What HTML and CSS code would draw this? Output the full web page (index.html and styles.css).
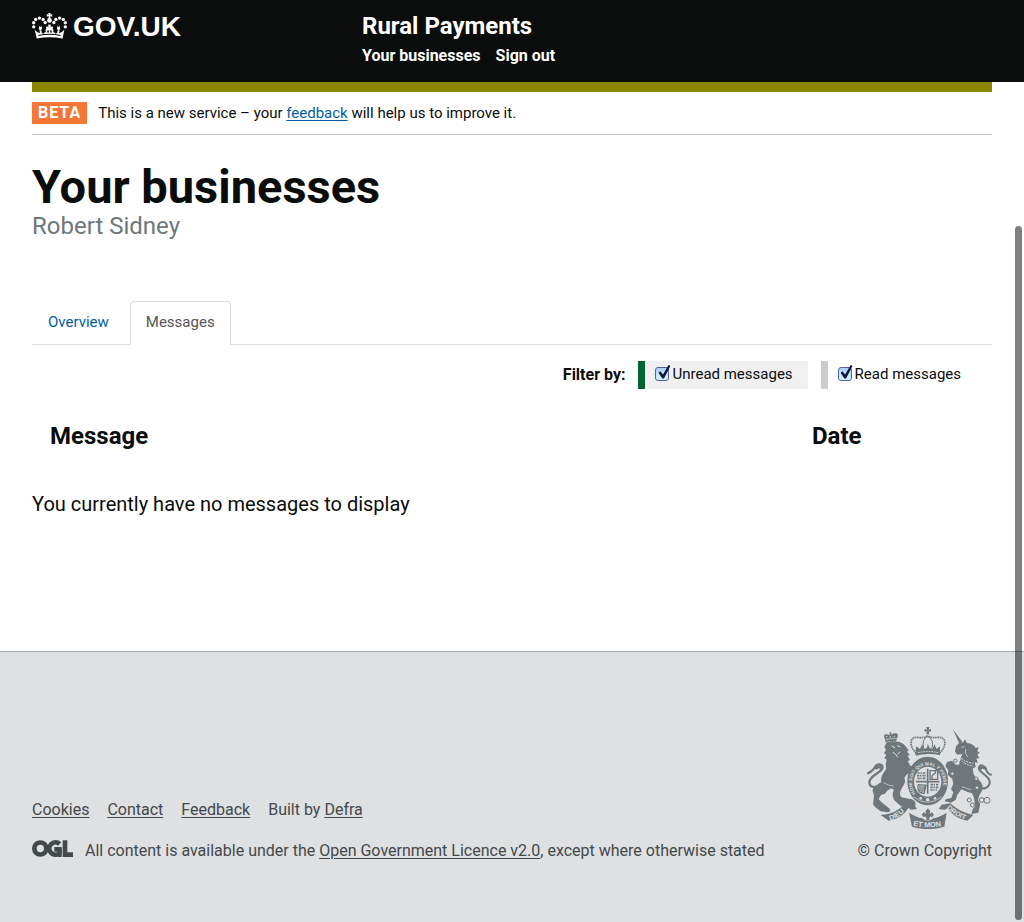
FILE: index.html
```html
<!DOCTYPE html>
<html lang="en">
<head>
<meta charset="utf-8">
<meta name="viewport" content="width=device-width, initial-scale=1">
<title>Your businesses - Rural Payments</title>
<link rel="stylesheet" href="styles.css">
</head>
<body>
<header class="site-header">
  <div class="wrap site-header-inner">
    <a class="logo" href="#">
      <svg class="crown" viewBox="36 38 104 77" aria-hidden="true">
        <g fill="#fff">
          <path d="M50 114 L44 88 Q52 98 60 97 L58 90 L64 90 L65 97 Q72 98 77 94 L76 88 L79 85 L77 80 L81 77 L85 81 L84 76 L85 72 L91 72 L92 76 L91 81 L95 77 L99 80 L97 85 L100 88 L99 94 Q105 98 111 97 L112 90 L118 90 L116 97 Q124 98 132 88 L127 114 Q88 106 50 114Z"/>
          <path d="M84 38h8l-2 5 6-2v8l-6-2 2 7h-8l2-7-6 2v-8l6 2z"/>
          <circle cx="88" cy="60" r="7"/>
          <circle cx="41" cy="79" r="5"/><circle cx="41" cy="67" r="5"/><circle cx="47" cy="57" r="5"/><circle cx="58" cy="53" r="5"/><circle cx="69" cy="57" r="5"/><circle cx="75" cy="66" r="5"/>
          <circle cx="135" cy="79" r="5"/><circle cx="135" cy="67" r="5"/><circle cx="129" cy="57" r="5"/><circle cx="118" cy="53" r="5"/><circle cx="107" cy="57" r="5"/><circle cx="101" cy="66" r="5"/>
          <path d="M58 76l3 4 3-4 2 9-5 6-5-6zM112 76l3 4 3-4 2 9-5 6-5-6z"/>
        </g>
        <path d="M55 105Q88 97 121 105" stroke="#0b0c0c" stroke-width="3" fill="none"/>
        <path d="M71 90l-5 7 5 3zM105 90l5 7-5 3zM82 89h4v7h-5zM94 89h-4v7h5z" fill="#0b0c0c"/>
      </svg>
      <span>GOV.UK</span>
    </a>
    <div class="service">
      <a class="service-name" href="#">Rural Payments</a>
      <nav class="service-nav" aria-label="Service">
        <a href="#">Your businesses</a>
        <a href="#">Sign out</a>
      </nav>
    </div>
  </div>
</header>

<main class="wrap main">
  <div class="phase">
    <strong class="phase-tag">BETA</strong>
    <span>This is a new service – your <a href="#">feedback</a> will help us to improve it.</span>
  </div>

  <h1 class="title">Your businesses</h1>
  <p class="subtitle">Robert Sidney</p>

  <nav class="tabs" aria-label="Sections">
    <a class="tab" href="#">Overview</a>
    <a class="tab tab-active" href="#" aria-current="page">Messages</a>
  </nav>

  <form class="filters">
    <strong>Filter by:</strong>
    <label class="filter filter-unread" for="unread"><input id="unread" type="checkbox" checked>Unread messages</label>
    <label class="filter" for="read"><input id="read" type="checkbox" checked>Read messages</label>
  </form>

  <table class="messages">
    <thead>
      <tr><th scope="col">Message</th><th class="col-date" scope="col">Date</th></tr>
    </thead>
  </table>
  <p class="empty">You currently have no messages to display</p>
</main>

<footer class="site-footer">
  <div class="wrap footer-inner">
    <div class="footer-meta">
      <ul class="footer-links">
        <li><a href="#">Cookies</a></li>
        <li><a href="#">Contact</a></li>
        <li><a href="#">Feedback</a></li>
        <li>Built by <a href="#">Defra</a></li>
      </ul>
      <div class="licence">
        <svg class="ogl" viewBox="36 135 123 51" role="img" aria-label="Open Government Licence">
          <g fill="none" stroke="#43484b" stroke-width="14">
            <circle cx="61" cy="160.500" r="18"/>
            <path d="M119 147A18.500 18.500 0 1 0 118 175V163H103"/>
            <path d="M135 136V179H159"/>
          </g>
          <path d="M112 160h13v26h-10z" fill="#43484b"/>
        </svg>
        <p>All content is available under the <a href="#">Open Government Licence v2.0</a>, except where otherwise stated</p>
      </div>
    </div>
    <a class="copyright" href="#">
      <svg class="crest" viewBox="33 20 375 306" aria-hidden="true">
        <defs>
          <path id="garter" d="M179 219A47 51 0 1 1 251 219"/>
          <path id="scroll-left" d="M103 300Q132 292 156 262"/>
          <path id="scroll-mid" d="M171 315Q216 327 266 315"/>
          <path id="scroll-right" d="M272 264Q298 292 342 302"/>
        </defs>
        <g fill="#6f777b">
          <!-- lion -->
          <path d="M89 66L84 48Q83 41 91 42Q98 42 101 44L101 36L106 36L106 43Q112 38 119 39Q128 40 125 49L120 63Q104 60 89 66Z"/>
          <path d="M92 66Q108 60 127 64Q144 68 151 81L158 90L153 94L161 103L155 107L162 119L155 122L163 136L177 139L165 154Q151 161 145 173Q150 184 143 194L136 207Q127 221 137 231L157 235Q174 235 178 247Q181 258 172 259L135 258L114 239Q106 222 114 208L105 204Q91 212 87 220L75 224L68 236L76 245L102 266Q105 274 96 276L74 273L57 260L51 252L54 226L50 213Q49 201 62 194L76 185Q73 173 82 158L91 145L89 131L92 118L85 113L91 103L84 99L90 88L85 80Z"/>
          <!-- unicorn -->
          <path d="M291 27l28 38-9 5z"/>
          <path d="M300 78L309 68L322 66L327 57L333 68Q352 70 359 83L368 81L364 92L371 97L364 103L370 113L361 115L366 127L356 126L359 140L351 144Q349 159 359 171Q374 181 380 196Q381 211 370 225L366 239L372 255L367 277L346 281L350 267L357 258L354 233L348 219L333 214L316 207L304 223L299 239L285 247L266 243L269 237L286 233L292 216L285 206L292 190L289 176L275 163L277 149L268 138L273 125L288 121L299 133L309 133L314 112L319 101L304 103L297 94Z"/>
          <!-- crown -->
          <path d="M211 20h9l-2 8 7-2v9l-7-2 2 9h-9l2-9-7 2v-9l7 2z"/>
          <path d="M179 88L181 78L192 86L198 72L204 85L213 83L215 70L221 83L230 85L235 72L242 86L252 78L252 105Q216 97 179 106Z"/>
          <!-- garter -->
          <path fill-rule="evenodd" d="M215 109A61 73 0 1 1 214.900 109ZM215 139A41 45 0 1 0 215.100 139Z"/>
          <!-- scroll -->
          <path d="M74 284Q118 283 149 249L175 253L183 266L164 268L158 262Q137 295 98 301Z"/>
          <path d="M352 284Q316 278 282 249L257 253L248 266L267 268L274 264Q297 296 334 301Z"/>
          <path d="M159 277Q216 314 272 277L265 319Q216 334 168 319Z"/>
        </g>
        <circle cx="215" cy="281" r="20" fill="#dee0e2"/>
        <g fill="#6f777b">
          <path d="M216 264l7 9-2 8 7-5 6 7-6 8-6-3v4h-4l4 8h-13l4-8h-4v-4l-6 3-6-8 6-7 7 5-2-8z"/>
        </g>
        <g fill="none" stroke="#6f777b">
          <!-- crown arches -->
          <path d="M181 99C157 76 162 49 184 51Q204 54 215 47Q227 54 247 51C270 49 275 76 250 99" stroke-width="5" stroke-dasharray="5 2"/>
          <path d="M203 83Q196 59 215 47Q235 59 228 83" stroke-width="3"/>
          <!-- tails -->
          <path d="M82 188C62 207 36 203 41 181C48 162 76 157 79 143C81 131 65 130 59 137Q52 151 34 160" stroke-width="7"/>
          <path d="M77 142Q64 136 58 146" stroke-width="9"/>
          <path d="M373 204C395 208 408 190 397 174C384 159 365 152 369 140C374 130 390 137 391 150Q396 161 407 164" stroke-width="6"/>
          <path d="M388 145q-13-8-16 3" stroke-width="8"/>
          <!-- shield quarters -->
          <path d="M215 145V220M180 184H250" stroke-width="5"/>
          <path d="M184 158h26M183 166h27M184 174h26M224 193h25M223 201h26M223 209h20" stroke-width="5" stroke-dasharray="7 2 4 3"/>
          <path d="M222 151h23v26h-23zM229 176q-4-10 3-13q8-4 6-10M186 193v14q5 12 18 13l6-25-24-2M192 196v16M198 198v18M204 196v18" stroke-width="4"/>
          <!-- chain -->
          <g stroke-width="3">
            <circle cx="298" cy="121" r="5" fill="#dee0e2"/><circle cx="289" cy="160" r="5" fill="#dee0e2"/><circle cx="361" cy="175" r="5" fill="#dee0e2"/><circle cx="363" cy="202" r="5" fill="#dee0e2"/><circle cx="340" cy="239" r="6"/><circle cx="349" cy="254" r="6"/><circle cx="365" cy="251" r="6"/><circle cx="377" cy="239" r="7"/><circle cx="393" cy="240" r="9"/>
          </g>
        </g>
        <g fill="none" stroke="#dee0e2">
          <path d="M107 77l10 5M124 76l9 4M111 96q8 3 14 15M132 94l-7 8" stroke-width="3"/>
          <path d="M88 58q16-5 34-3" stroke-width="2"/>
          <path d="M309 107Q326 126 352 129M311 116Q328 135 352 137" stroke-width="3" stroke-dasharray="6 3"/>
          <path d="M316 81l10-2M329 86q-5 13 7 24" stroke-width="2"/>
          <path d="M186 97Q216 90 246 97" stroke-width="3" stroke-dasharray="5 3"/>
          <path d="M82 187Q103 198 113 197M317 199l28 9" stroke-width="2"/>
          <path d="M172 229Q215 263 258 229" stroke-width="2"/>
        </g>
        <g fill="#dee0e2">
          <circle cx="215" cy="238" r="5"/><circle cx="194" cy="234" r="4"/><circle cx="237" cy="234" r="4"/>
          <circle cx="92" cy="49" r="2"/><circle cx="103" cy="50" r="2"/><circle cx="115" cy="48" r="2"/>
        </g>
        <g class="crest-text">
          <text font-size="14"><textPath href="#garter">HONI SOIT QUI MAL Y PENSE</textPath></text>
          <text font-size="21"><textPath href="#scroll-left">DIEU</textPath></text>
          <text font-size="22"><textPath href="#scroll-mid">ET MON</textPath></text>
          <text font-size="21"><textPath href="#scroll-right">DROIT</textPath></text>
        </g>
      </svg>
      <span>© Crown Copyright</span>
    </a>
  </div>
</footer>
<div class="scroll-thumb" aria-hidden="true"></div>
</body>
</html>
```
FILE: styles.css
```css
* { box-sizing: border-box; }

body {
  margin: 0;
  min-height: 100vh;
  display: flex;
  flex-direction: column;
  background: #fff;
  color: #0b0c0c;
  font: 15px/20px Roboto, "Open Sans", sans-serif;
}

h1, p, ul { margin: 0; padding: 0; }

.wrap {
  width: 100%;
  max-width: 1024px;
  margin: 0 auto;
  padding: 0 32px;
}

/* Header */
.site-header { background: #0b0c0c; color: #fff; }
.site-header a { color: #fff; text-decoration: none; }
.site-header-inner { display: flex; padding-top: 11px; padding-bottom: 15px; }
.logo {
  flex: 0 0 330px;
  display: flex;
  align-items: flex-start;
  gap: 6px;
  font: bold 28px/32px "Liberation Sans", Arial, sans-serif;
}
.crown { width: 35px; height: 26px; margin-top: 2px; }
.service-name { display: block; font-size: 24px; line-height: 30px; font-weight: bold; }
.service-nav { display: flex; gap: 15px; margin-top: 4px; font-size: 16px; line-height: 22px; font-weight: bold; }

/* Phase banner */
.main { flex: 1; }
.phase {
  display: flex;
  align-items: center;
  gap: 11px;
  padding: 10px 0;
  border-top: 10px solid #8a8800;
  border-bottom: 1px solid #bfc1c3;
}
.phase a { color: #005ea5; }
.phase-tag {
  padding: 0 6px;
  background: #f47738;
  color: #fff;
  font-size: 16px;
  line-height: 22px;
  letter-spacing: 1px;
}

.title { margin-top: 26px; font-size: 47px; line-height: 52px; }
.subtitle { color: #6f777b; font-size: 24px; line-height: 26px; }

/* Tabs */
.tabs { display: flex; gap: 5px; margin-top: 62px; border-bottom: 1px solid #dee0e2; }
.tab {
  padding: 10px 15px 12px;
  border: 1px solid transparent;
  border-bottom: 0;
  color: #005ea5;
  text-decoration: none;
}
.tab-active {
  margin-bottom: -1px;
  border-color: #dcdcdc;
  border-radius: 4px 4px 0 0;
  background: #fff;
  color: #555;
}

/* Filters */
.filters { display: flex; justify-content: flex-end; align-items: center; gap: 13px; margin-top: 16px; padding-right: 16px; }
.filters strong { font-size: 16px; }
.filter {
  display: flex;
  align-items: center;
  gap: 3px;
  padding: 3px 15px 5px 10px;
  border-left: 7px solid #ccc;
}
.filter-unread { border-left-color: #006435; background: #f0f0f0; }
.filter input {
  appearance: none;
  position: relative;
  width: 14px;
  height: 14px;
  margin: 0;
  border: 1px solid #5660a5;
  border-radius: 3px;
  background: linear-gradient(#a9d0f5, #c4e5fc 50%, #d2f3ff);
}
.filter input:checked::before {
  content: "";
  position: absolute;
  left: 2px;
  top: -3px;
  width: 12px;
  height: 14px;
  background: #0b1a3a;
  clip-path: polygon(0 55%, 15% 45%, 38% 68%, 84% 0, 100% 6%, 46% 96%, 32% 96%);
}

/* Messages */
.messages { width: 100%; margin-top: 32px; border-collapse: collapse; table-layout: fixed; }
.messages th { padding: 0 18px; text-align: left; font-size: 24px; line-height: 30px; }
.messages .col-date { width: 198px; }
.empty { margin: 40px 0 128px; font-size: 20px; line-height: 26px; }

/* Footer */
.site-footer { background: #dee0e2; border-top: 1px solid #a1acb2; color: #43484b; font-size: 16px; }
.site-footer a { color: #43484b; }
.footer-inner { display: flex; justify-content: space-between; align-items: flex-end; padding-top: 75px; padding-bottom: 61px; }
.footer-links { display: flex; gap: 18px; list-style: none; }
.licence { display: flex; align-items: center; gap: 12px; margin-top: 20px; }
.ogl { width: 41px; height: 17px; margin-bottom: 4px; }
.copyright { display: flex; flex-direction: column; align-items: flex-end; gap: 12px; }
.site-footer .copyright { text-decoration: none; }
.crest { width: 125px; height: 102px; }
.crest-text { font-family: "Liberation Sans", Arial, sans-serif; font-weight: bold; fill: #dee0e2; }

a { text-underline-offset: 2px; text-decoration-thickness: 1px; }

.scroll-thumb {
  position: fixed;
  top: 226px;
  right: 2px;
  bottom: 2px;
  width: 7px;
  border-radius: 4px;
  background: rgba(0, 0, 0, 0.5);
}
```
